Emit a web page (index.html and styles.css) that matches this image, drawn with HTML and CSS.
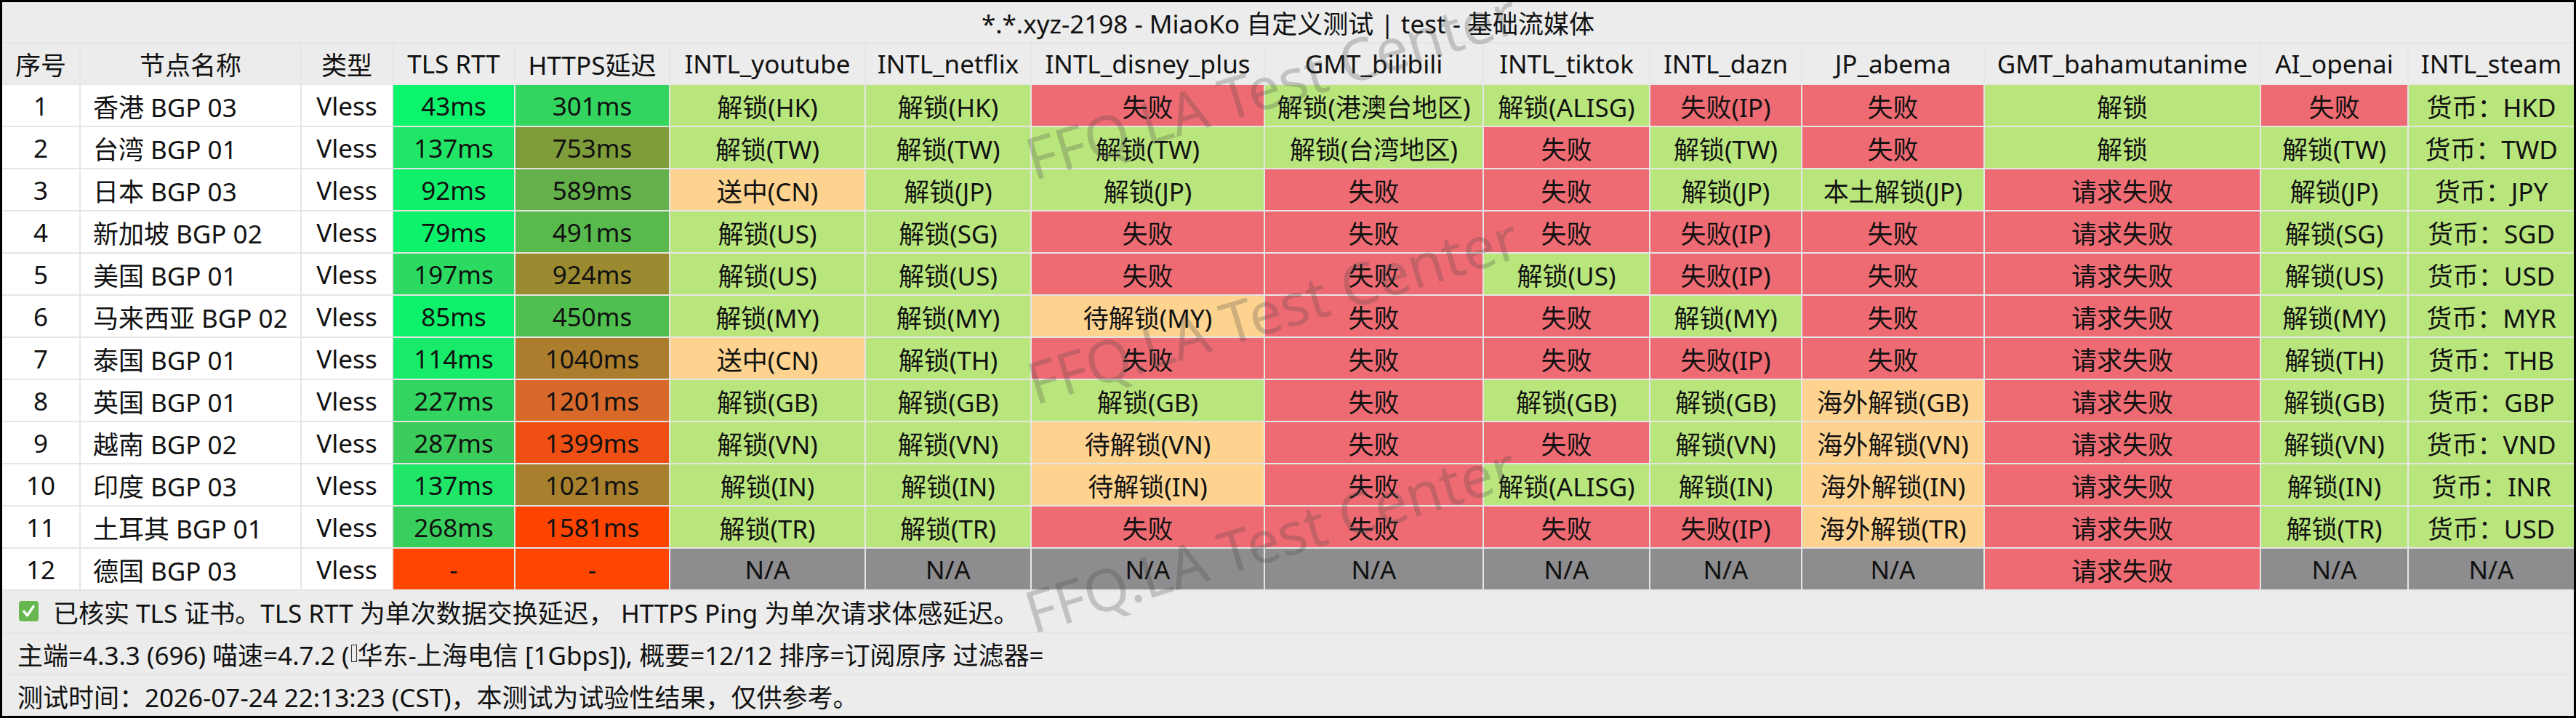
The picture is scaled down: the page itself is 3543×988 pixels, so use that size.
FILE: index.html
```html
<!DOCTYPE html>
<html lang="zh-CN">
<head>
<meta charset="utf-8">
<title>MiaoKo 自定义测试</title>
<link rel="stylesheet" href="styles.css">
</head>
<body>
<div class="frame">
  <div class="sheet">
    <div class="title">*.*.xyz-2198 - MiaoKo 自定义测试 | test - 基础流媒体</div>

    <div class="c hd">序号</div><div class="c hd">节点名称</div><div class="c hd">类型</div><div class="c hd">TLS RTT</div><div class="c hd">HTTPS延迟</div><div class="c hd">INTL_youtube</div><div class="c hd">INTL_netflix</div><div class="c hd">INTL_disney_plus</div><div class="c hd">GMT_bilibili</div><div class="c hd">INTL_tiktok</div><div class="c hd">INTL_dazn</div><div class="c hd">JP_abema</div><div class="c hd">GMT_bahamutanime</div><div class="c hd">AI_openai</div><div class="c hd">INTL_steam</div>

    <div class="c w">1</div><div class="c w name">香港 BGP 03</div><div class="c w">Vless</div><div class="c" style="background:#0cf46c">43ms</div><div class="c" style="background:#33d55f">301ms</div><div class="c g">解锁(HK)</div><div class="c g">解锁(HK)</div><div class="c r">失败</div><div class="c g">解锁(港澳台地区)</div><div class="c g">解锁(ALISG)</div><div class="c r">失败(IP)</div><div class="c r">失败</div><div class="c g">解锁</div><div class="c r">失败</div><div class="c g">货币：HKD</div>

    <div class="c w">2</div><div class="c w name">台湾 BGP 01</div><div class="c w">Vless</div><div class="c" style="background:#20e567">137ms</div><div class="c" style="background:#7f9c3a">753ms</div><div class="c g">解锁(TW)</div><div class="c g">解锁(TW)</div><div class="c g">解锁(TW)</div><div class="c g">解锁(台湾地区)</div><div class="c r">失败</div><div class="c g">解锁(TW)</div><div class="c r">失败</div><div class="c g">解锁</div><div class="c g">解锁(TW)</div><div class="c g">货币：TWD</div>

    <div class="c w">3</div><div class="c w name">日本 BGP 03</div><div class="c w">Vless</div><div class="c" style="background:#10f06b">92ms</div><div class="c" style="background:#64b04a">589ms</div><div class="c o">送中(CN)</div><div class="c g">解锁(JP)</div><div class="c g">解锁(JP)</div><div class="c r">失败</div><div class="c r">失败</div><div class="c g">解锁(JP)</div><div class="c g">本土解锁(JP)</div><div class="c r">请求失败</div><div class="c g">解锁(JP)</div><div class="c g">货币：JPY</div>

    <div class="c w">4</div><div class="c w name">新加坡 BGP 02</div><div class="c w">Vless</div><div class="c" style="background:#0df26b">79ms</div><div class="c" style="background:#58b94c">491ms</div><div class="c g">解锁(US)</div><div class="c g">解锁(SG)</div><div class="c r">失败</div><div class="c r">失败</div><div class="c r">失败</div><div class="c r">失败(IP)</div><div class="c r">失败</div><div class="c r">请求失败</div><div class="c g">解锁(SG)</div><div class="c g">货币：SGD</div>

    <div class="c w">5</div><div class="c w name">美国 BGP 01</div><div class="c w">Vless</div><div class="c" style="background:#2cd961">197ms</div><div class="c" style="background:#9b8a2f">924ms</div><div class="c g">解锁(US)</div><div class="c g">解锁(US)</div><div class="c r">失败</div><div class="c r">失败</div><div class="c g">解锁(US)</div><div class="c r">失败(IP)</div><div class="c r">失败</div><div class="c r">请求失败</div><div class="c g">解锁(US)</div><div class="c g">货币：USD</div>

    <div class="c w">6</div><div class="c w name">马来西亚 BGP 02</div><div class="c w">Vless</div><div class="c" style="background:#0ef26b">85ms</div><div class="c" style="background:#4fc04f">450ms</div><div class="c g">解锁(MY)</div><div class="c g">解锁(MY)</div><div class="c o">待解锁(MY)</div><div class="c r">失败</div><div class="c r">失败</div><div class="c g">解锁(MY)</div><div class="c r">失败</div><div class="c r">请求失败</div><div class="c g">解锁(MY)</div><div class="c g">货币：MYR</div>

    <div class="c w">7</div><div class="c w name">泰国 BGP 01</div><div class="c w">Vless</div><div class="c" style="background:#17eb69">114ms</div><div class="c" style="background:#ab7d2c">1040ms</div><div class="c o">送中(CN)</div><div class="c g">解锁(TH)</div><div class="c r">失败</div><div class="c r">失败</div><div class="c r">失败</div><div class="c r">失败(IP)</div><div class="c r">失败</div><div class="c r">请求失败</div><div class="c g">解锁(TH)</div><div class="c g">货币：THB</div>

    <div class="c w">8</div><div class="c w name">英国 BGP 01</div><div class="c w">Vless</div><div class="c" style="background:#33d45f">227ms</div><div class="c" style="background:#d8692a">1201ms</div><div class="c g">解锁(GB)</div><div class="c g">解锁(GB)</div><div class="c g">解锁(GB)</div><div class="c r">失败</div><div class="c g">解锁(GB)</div><div class="c g">解锁(GB)</div><div class="c o">海外解锁(GB)</div><div class="c r">请求失败</div><div class="c g">解锁(GB)</div><div class="c g">货币：GBP</div>

    <div class="c w">9</div><div class="c w name">越南 BGP 02</div><div class="c w">Vless</div><div class="c" style="background:#3ccc5c">287ms</div><div class="c" style="background:#f04f14">1399ms</div><div class="c g">解锁(VN)</div><div class="c g">解锁(VN)</div><div class="c o">待解锁(VN)</div><div class="c r">失败</div><div class="c r">失败</div><div class="c g">解锁(VN)</div><div class="c o">海外解锁(VN)</div><div class="c r">请求失败</div><div class="c g">解锁(VN)</div><div class="c g">货币：VND</div>

    <div class="c w">10</div><div class="c w name">印度 BGP 03</div><div class="c w">Vless</div><div class="c" style="background:#20e567">137ms</div><div class="c" style="background:#a8802d">1021ms</div><div class="c g">解锁(IN)</div><div class="c g">解锁(IN)</div><div class="c o">待解锁(IN)</div><div class="c r">失败</div><div class="c g">解锁(ALISG)</div><div class="c g">解锁(IN)</div><div class="c o">海外解锁(IN)</div><div class="c r">请求失败</div><div class="c g">解锁(IN)</div><div class="c g">货币：INR</div>

    <div class="c w">11</div><div class="c w name">土耳其 BGP 01</div><div class="c w">Vless</div><div class="c" style="background:#39cf5d">268ms</div><div class="c" style="background:#ff4400">1581ms</div><div class="c g">解锁(TR)</div><div class="c g">解锁(TR)</div><div class="c r">失败</div><div class="c r">失败</div><div class="c r">失败</div><div class="c r">失败(IP)</div><div class="c o">海外解锁(TR)</div><div class="c r">请求失败</div><div class="c g">解锁(TR)</div><div class="c g">货币：USD</div>

    <div class="c w">12</div><div class="c w name">德国 BGP 03</div><div class="c w">Vless</div><div class="c" style="background:#ff4500">-</div><div class="c" style="background:#ff4500">-</div><div class="c n">N/A</div><div class="c n">N/A</div><div class="c n">N/A</div><div class="c n">N/A</div><div class="c n">N/A</div><div class="c n">N/A</div><div class="c n">N/A</div><div class="c r">请求失败</div><div class="c n">N/A</div><div class="c n">N/A</div>

    <div class="foot foot-check">
      <svg class="check" viewBox="0 0 27 28" width="27" height="28" aria-hidden="true"><rect x="0" y="0" width="27" height="28" rx="4" fill="#67b851"/><path d="M7 14.5 L11.5 20 L20 7.5" fill="none" stroke="#ffffff" stroke-width="3.4" stroke-linecap="round" stroke-linejoin="round"/></svg>
      <span>已核实 TLS 证书。TLS RTT 为单次数据交换延迟， HTTPS Ping 为单次请求体感延迟。</span>
    </div>
    <div class="foot">主端=4.3.3 (696) 喵速=4.7.2 (<span class="tofu"></span>华东-上海电信 [1Gbps]), 概要=12/12 排序=订阅原序 过滤器=</div>
    <div class="foot">测试时间：2026-07-24 22:13:23 (CST)，本测试为试验性结果，仅供参考。</div>
  </div>

  <span class="wm wm1">FFQ.LA Test Center</span>
  <span class="wm wm2">FFQ.LA Test Center</span>
  <span class="wm wm3">FFQ.LA Test Center</span>
</div>
</body>
</html>
```

FILE: styles.css
```css
* { box-sizing: border-box; }

html, body {
  margin: 0;
  padding: 0;
  background: #000;
}

.frame {
  position: relative;
  width: 3543px;
  height: 988px;
  border: 3px solid #000;
  overflow: hidden;
  font-family: "Noto Sans", "Noto Sans CJK SC", sans-serif;
  color: #111;
}

.sheet {
  display: grid;
  grid-template-columns: 106px 302px 124px 166px 211px 267px 226px 319px 299px 227px 207px 249px 378px 201px 227px;
  grid-template-rows: 55px 55px repeat(12, 56px) 56px 56px 56px;
  gap: 2px;
  width: 100%;
  height: 100%;
  background: #e6e6e6;
}

.title {
  grid-column: 1 / -1;
  display: flex;
  align-items: center;
  justify-content: center;
  background: #ececec;
  font-size: 35px;
  white-space: nowrap;
}

.c {
  display: flex;
  align-items: center;
  justify-content: center;
  font-size: 35px;
  white-space: nowrap;
  overflow: hidden;
}

.hd { background: #ececec; }
.w { background: #ffffff; }
.g { background: #b9e67c; }
.r { background: #ef6b73; }
.o { background: #fdd38f; }
.n { background: #8d8c8e; }

.name {
  justify-content: flex-start;
  padding-left: 17px;
}

.foot {
  grid-column: 1 / -1;
  display: flex;
  align-items: center;
  padding-left: 21px;
  background: #ececec;
  font-size: 35px;
  white-space: nowrap;
}

.foot-check {
  padding-left: 23px;
  gap: 20px;
}

.check {
  flex: none;
  display: block;
}

.tofu {
  display: inline-block;
  width: 8px;
  height: 24px;
  margin: 0 1px 0 2px;
  border: 1.5px solid #333;
  vertical-align: -3px;
}

.wm {
  position: absolute;
  transform: translate(-50%, -50%) rotate(-17deg);
  font-family: "Noto Sans", sans-serif;
  font-size: 80px;
  color: rgba(70, 70, 70, 0.26);
  white-space: nowrap;
  pointer-events: none;
}

.wm1 { left: 1745px; top: 113px; }
.wm2 { left: 1747px; top: 422px; }
.wm3 { left: 1744px; top: 737px; }
```
